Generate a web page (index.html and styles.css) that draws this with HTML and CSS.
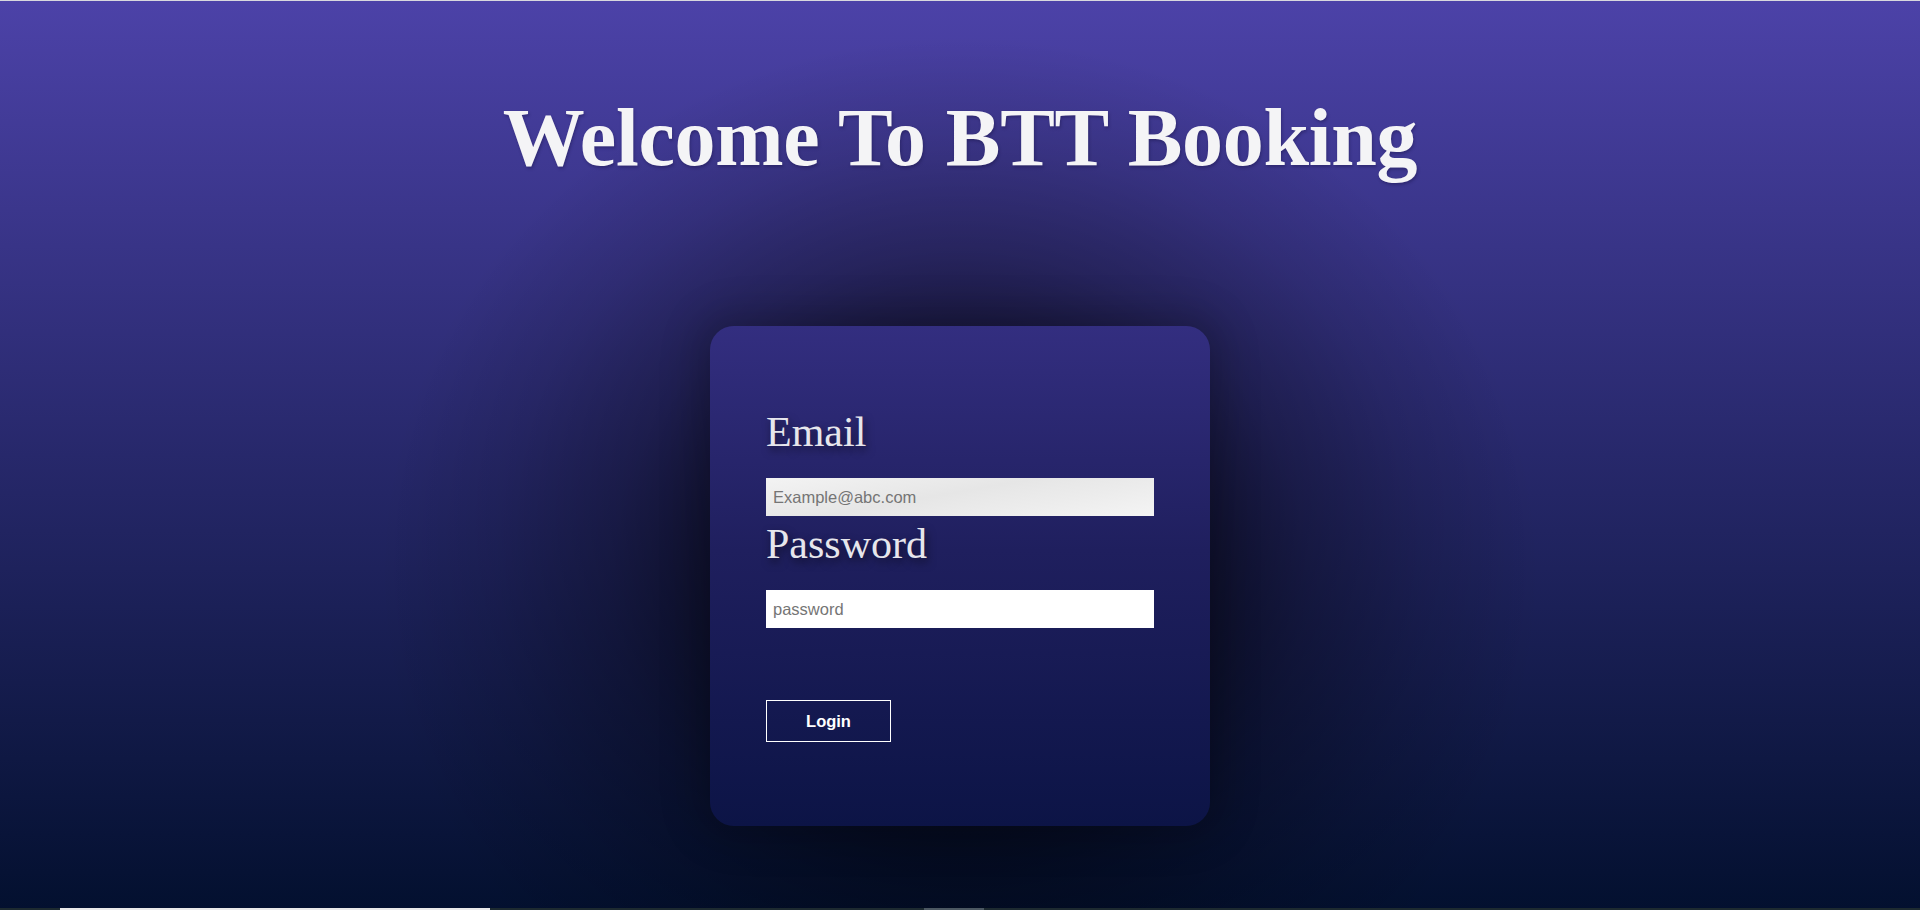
FILE: index.html
```html
<!DOCTYPE html>
<html lang="en">
<head>
<meta charset="utf-8">
<title>BTT Booking - Login</title>
<link rel="stylesheet" href="styles.css">
</head>
<body>
  <div class="topline"></div>
  <main class="page">
    <h1 class="title">Welcome To BTT Booking</h1>
    <form class="card">
      <label class="label" for="email">Email</label>
      <input class="field field-email" id="email" type="email" placeholder="Example@abc.com">
      <label class="label label-pass" for="password">Password</label>
      <input class="field" id="password" type="password" placeholder="password">
      <button class="btn" type="button">Login</button>
    </form>
  </main>
  <div class="bottombar"><span class="bar-a"></span><span class="bar-b"></span></div>
</body>
</html>
```
FILE: styles.css
```css
html, body {
  margin: 0;
  padding: 0;
  height: 100%;
}

body {
  display: flex;
  flex-direction: column;
  min-height: 910px;
  overflow: hidden;
  background:
    radial-gradient(ellipse 580px 540px at 960px 576px, rgba(0, 0, 0, 0.6) 0%, rgba(0, 0, 0, 0.52) 43%, rgba(0, 0, 0, 0.3) 60%, rgba(0, 0, 0, 0.12) 80%, rgba(0, 0, 0, 0) 100%),
    linear-gradient(to bottom, #4c42a8 0%, #27286b 50%, #03102f 100%);
  font-family: "Liberation Serif", "Times New Roman", serif;
}

.topline {
  height: 1px;
  background: #d8d8de;
  flex: none;
}

.page {
  flex: 1;
  display: flex;
  flex-direction: column;
  align-items: center;
}

.title {
  margin: 90px 0 0;
  font-family: "Liberation Serif", "Times New Roman", serif;
  font-weight: bold;
  font-size: 82px;
  line-height: normal;
  color: #f4f4f6;
  text-shadow: 1px 2px 3px rgba(20, 15, 60, 0.35);
  letter-spacing: -0.3px;
}

.card {
  margin-top: 141px;
  width: 500px;
  height: 500px;
  box-sizing: border-box;
  padding: 82px 56px 84px;
  border-radius: 24px;
  background: linear-gradient(to bottom, #332e80 0%, #1f1f5e 45%, #0c1446 100%);
  box-shadow: 0 0 40px 10px rgba(0, 0, 0, 0.22);
  display: flex;
  flex-direction: column;
  align-items: flex-start;
}

.label {
  display: block;
  font-size: 42px;
  line-height: 48px;
  color: #e6e6ec;
  text-shadow: 2px 4px 8px rgba(0, 0, 0, 0.55);
  margin-bottom: 22px;
}

.label-pass {
  margin-top: 4px;
}

.field {
  width: 388px;
  height: 38px;
  box-sizing: border-box;
  border: none;
  outline: none;
  padding: 0 7px;
  margin: 0;
  font-family: "Liberation Sans", Arial, sans-serif;
  font-size: 16.5px;
  color: #333;
  background: #ffffff;
}

.field::placeholder {
  color: #757575;
}

.field-email {
  background: linear-gradient(170deg, #f3f3f3 0%, #e6e6e6 45%, #ececec 70%, #f4f4f4 100%);
}

.btn {
  margin-top: 72px;
  width: 125px;
  height: 42px;
  box-sizing: border-box;
  border: 1px solid #ffffff;
  background: transparent;
  color: #ffffff;
  font-family: "Liberation Sans", Arial, sans-serif;
  font-weight: bold;
  font-size: 16.5px;
  cursor: pointer;
}

.bottombar {
  flex: none;
  height: 2px;
  background: #1d2a30;
  position: relative;
}

.bar-a {
  position: absolute;
  left: 60px;
  width: 430px;
  top: 0;
  bottom: 0;
  background: #e9e9e9;
}

.bar-b {
  position: absolute;
  left: 924px;
  width: 60px;
  top: 0;
  bottom: 0;
  background: #4c5862;
}
```
